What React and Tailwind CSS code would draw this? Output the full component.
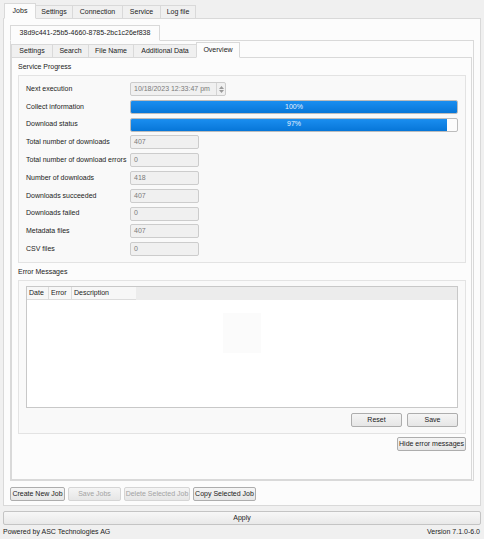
import React from 'react';

const outerTabs = [
  { label: 'Jobs', w: 32, active: true },
  { label: 'Settings', w: 38 },
  { label: 'Connection', w: 51 },
  { label: 'Service', w: 39 },
  { label: 'Log file', w: 36 },
];

const subTabs = [
  { label: 'Settings', w: 42 },
  { label: 'Search', w: 37 },
  { label: 'File Name', w: 46 },
  { label: 'Additional Data', w: 64 },
  { label: 'Overview', w: 44, active: true },
];

const fields = [
  ['Total number of downloads', '407'],
  ['Total number of download errors', '0'],
  ['Number of downloads', '418'],
  ['Downloads succeeded', '407'],
  ['Downloads failed', '0'],
  ['Metadata files', '407'],
  ['CSV files', '0'],
];

const Tab = ({ label, w, active }) => (
  <div
    style={{ width: w }}
    className={`flex items-center justify-center border border-[#d9d9d9] -mr-px ${
      active ? 'h-[16px] bg-[#fcfcfc] border-b-[#fcfcfc] relative z-10' : 'h-[14px] mt-[2px] bg-[#f0f0f0]'
    }`}
  >
    {label}
  </div>
);

const Button = ({ children, w, disabled }) => (
  <div
    style={{ width: w }}
    className={`h-[14px] flex items-center justify-center rounded-[2px] border bg-gradient-to-b from-[#f5f5f5] to-[#e6e6e6] ${
      disabled ? 'border-[#d5d5d5] text-[#a3a3a3]' : 'border-[#adadad] text-[#1a1a1a]'
    }`}
  >
    {children}
  </div>
);

const ProgressBar = ({ value }) => (
  <div className="relative flex-1 h-[14px] border border-[#bcbcbc] rounded-[2px] bg-[#fcfcfc] overflow-hidden">
    <div
      style={{ width: `${value}%` }}
      className="h-full bg-gradient-to-b from-[#1a8ef0] to-[#0676d8]"
    />
    <div className="absolute inset-0 flex items-center justify-center text-[#e6f2ff]">{value}%</div>
  </div>
);

const Field = ({ value }) => (
  <div className="w-[69px] h-[14px] flex items-center pl-[3px] border border-[#cccccc] rounded-[2px] bg-[#f0f0f0] text-[#7a7a7a]">
    {value}
  </div>
);

export default function App() {
  return (
    <div className="w-[484px] h-[539px] bg-[#f0f0f0] flex flex-col px-[3px] pt-[3px] font-['Liberation_Sans',Arial,sans-serif] text-[7px] text-[#222222] overflow-hidden">
      {/* outer tabs */}
      <div className="flex h-[16px] pl-[1px]">
        {outerTabs.map((t) => (
          <Tab key={t.label} {...t} />
        ))}
      </div>

      {/* outer pane */}
      <div className="-mt-px h-[488px] border border-[#d9d9d9] bg-[#fcfcfc] flex flex-col pl-[6px] pr-[6px] pt-[6px]">
        <div className="flex h-[16px]">
          <Tab label="38d9c441-25b5-4660-8785-2bc1c26ef838" w={150} active />
        </div>

        {/* job pane */}
        <div className="-mt-px h-[441px] border border-[#d9d9d9] bg-[#fcfcfc] flex flex-col pt-[1px] pr-[1px]">
          <div className="flex h-[16px]">
            {subTabs.map((t) => (
              <Tab key={t.label} {...t} />
            ))}
          </div>

          {/* overview pane */}
          <div className="-mt-px flex-1 border border-[#d9d9d9] bg-[#fcfcfc] flex flex-col pl-[6px] pr-[5px]">
            <div className="h-[17px] flex items-center pt-[1px]">Service Progress</div>
            <div className="h-[188px] border border-[#e3e3e3] bg-[#f9f9f9] flex flex-col gap-[3.8px] pt-[6px] pl-[7px] pr-[7px]">
              <div className="flex items-center h-[14px]">
                <div className="w-[104px]">Next execution</div>
                <div className="w-[96px] h-[14px] flex items-center border border-[#cccccc] rounded-[2px] bg-[#f0f0f0] text-[#7a7a7a]">
                  <div className="flex-1 pl-[3px]">10/18/2023 12:33:47 pm</div>
                  <div className="w-[9px] h-full border-l border-[#d4d4d4] flex flex-col items-center justify-center gap-[1px]">
                    <svg width="5" height="3" viewBox="0 0 5 3"><path d="M0 3 L2.5 0 L5 3 Z" fill="#9a9a9a" /></svg>
                    <svg width="5" height="3" viewBox="0 0 5 3"><path d="M0 0 L2.5 3 L5 0 Z" fill="#9a9a9a" /></svg>
                  </div>
                </div>
              </div>
              <div className="flex items-center h-[14px]">
                <div className="w-[104px]">Collect information</div>
                <ProgressBar value={100} />
              </div>
              <div className="flex items-center h-[14px]">
                <div className="w-[104px]">Download status</div>
                <ProgressBar value={97} />
              </div>
              {fields.map(([label, value]) => (
                <div key={label} className="flex items-center h-[14px]">
                  <div className="w-[104px] whitespace-nowrap">{label}</div>
                  <Field value={value} />
                </div>
              ))}
            </div>

            <div className="h-[17px] flex items-center pt-[1px]">Error Messages</div>
            <div className="h-[154px] border border-[#e3e3e3] bg-[#f9f9f9] flex flex-col pt-[5px] px-[7px]">
              <div className="h-[122px] border border-[#c8c8c8] bg-white flex flex-col">
                <div className="flex h-[13px] bg-[#ececec]">
                  <div className="w-[22px] pl-[2px] flex items-center bg-[#f7f7f7] border-r border-b border-[#dcdcdc]">Date</div>
                  <div className="w-[23px] pl-[2px] flex items-center bg-[#f7f7f7] border-r border-b border-[#dcdcdc]">Error</div>
                  <div className="w-[64px] pl-[2px] flex items-center bg-[#f7f7f7] border-b border-[#dcdcdc]">Description</div>
                </div>
                <div className="flex-1 flex justify-center pt-[13px]">
                  <div className="w-[38px] h-[40px] bg-[#fbfbfb]" />
                </div>
              </div>
              <div className="flex justify-end gap-[5px] mt-[5px]">
                <Button w={51}>Reset</Button>
                <Button w={51}>Save</Button>
              </div>
            </div>

            <div className="flex justify-end mt-[3px]">
              <Button w={69}>Hide error messages</Button>
            </div>
          </div>
        </div>

        {/* job buttons */}
        <div className="flex gap-[3px] mt-[6px]">
          <Button w={55}>Create New Job</Button>
          <Button w={53} disabled>Save Jobs</Button>
          <Button w={66} disabled>Delete Selected Job</Button>
          <Button w={63}>Copy Selected Job</Button>
        </div>
      </div>

      <div className="mt-[5px]">
        <div className="h-[14px] flex items-center justify-center rounded-[2px] border border-[#c4c4c4] bg-gradient-to-b from-[#f7f7f7] to-[#e9e9e9]">
          Apply
        </div>
      </div>

      <div className="flex justify-between items-center h-[14px] pr-[1px]">
        <div>Powered by ASC Technologies AG</div>
        <div>Version 7.1.0-6.0</div>
      </div>
    </div>
  );
}
